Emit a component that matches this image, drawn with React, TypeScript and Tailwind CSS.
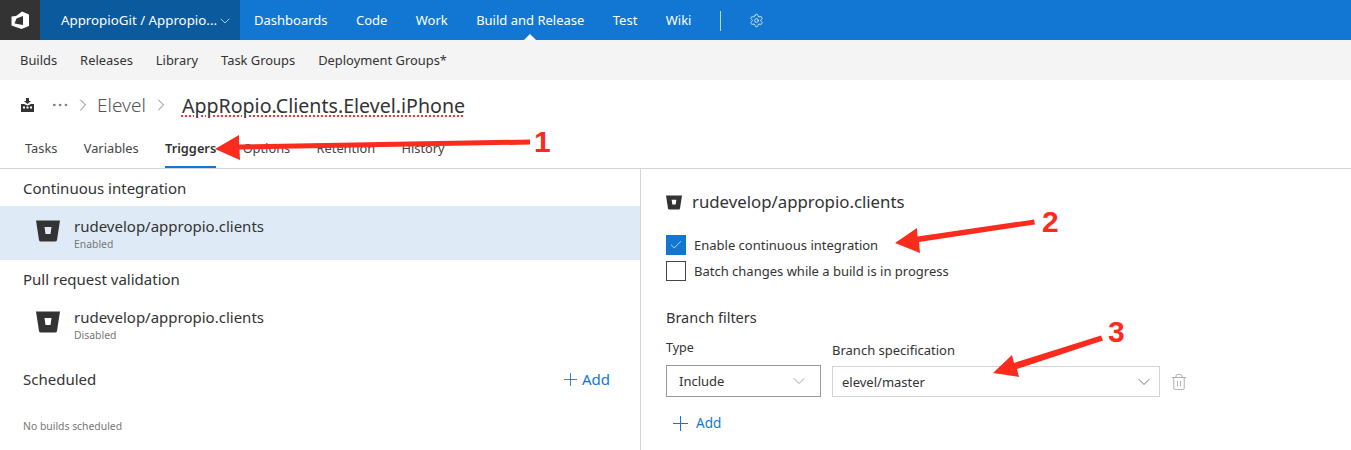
import { ChevronDown, ChevronRight, Settings, Trash2, Check, MoreHorizontal } from "lucide-react";

const font = "font-['Noto_Sans','Open_Sans',sans-serif]";

function BucketIcon({ className }: { className: string }) {
  return (
    <svg viewBox="0 0 24 22" className={className}>
      <path
        fillRule="evenodd"
        fill="#333"
        d="M0 0.5 H24 L21 20 Q20.8 21.5 19 21.5 H5 Q3.2 21.5 3 20 Z M8.5 7 L9.5 14 H14.5 L15.5 7 Z"
      />
    </svg>
  );
}

function Logo() {
  return (
    <svg viewBox="0 0 20 20" className="w-5 h-5">
      <path
        fillRule="evenodd"
        fill="#fff"
        d="M12 1.5 L19 4.5 V16 L11.5 19 L1.5 15.5 V6.5 L6 6 Z M13 6 L6.5 8.5 L4.5 13.5 L13 15 Z"
      />
    </svg>
  );
}

function PlusIcon({ className }: { className: string }) {
  return (
    <svg viewBox="0 0 15 15" className={className} stroke="#1277d3" strokeWidth="1">
      <path d="M7.5 0 V15 M0 7.5 H15" />
    </svg>
  );
}

function TreeItem({ sub }: { sub: string }) {
  return (
    <div className="flex items-center gap-[14px] pl-9 h-full">
      <BucketIcon className="w-6 h-[22px] mb-[4px]" />
      <div className="mt-[1px]">
        <div className="text-[15px] leading-[21px] text-[#333]">rudevelop/appropio.clients</div>
        <div className="text-[10.4px] leading-[14px] text-[#767676]">{sub}</div>
      </div>
    </div>
  );
}

function Annotations() {
  const num = "absolute text-[30px] leading-[36px] font-bold text-[#fb2b1e] font-['Liberation_Sans',sans-serif]";
  return (
    <div className="absolute inset-0 pointer-events-none">
      <svg width="1351" height="450" className="absolute left-0 top-0">
        <g fill="#fb2b1e" stroke="none">
          <path d="M215 149 L239 135 L239 144.5 L530 139.5 L530 144.5 L239.5 149.5 L240 160 Z" />
          <path d="M895 243 L917 228 L917.5 236.5 L1034 219.5 L1035 224.5 L919 242 L920 253 Z" />
          <path d="M993 373 L1012 355 L1014 363 L1101 335.5 L1103 340.5 L1017 369 L1019 377 Z" />
        </g>
      </svg>
      <span className={`${num} left-[534px] top-[124px]`}>1</span>
      <span className={`${num} left-[1042px] top-[204px]`}>2</span>
      <span className={`${num} left-[1108px] top-[314px]`}>3</span>
    </div>
  );
}

export default function App() {
  return (
    <div className={`relative w-[1351px] h-[450px] overflow-hidden bg-white ${font}`}>
      <div className="flex h-10 bg-[#1277d3] text-white text-[13px]">
        <div className="w-10 bg-[#333] flex items-center justify-center">
          <Logo />
        </div>
        <div className="w-[200px] bg-[#0b5a9e] flex items-center pl-[21px] pt-[1px]">
          <span className="text-[13.3px]">AppropioGit / Appropio...</span>
          <ChevronDown size={16} strokeWidth={1} />
        </div>
        <div className="flex items-center gap-[28.4px] pl-[14px] pt-[1px]">
          <span>Dashboards</span>
          <span>Code</span>
          <span>Work</span>
          <span className="relative h-full flex items-center">
            Build and Release
            <span className="absolute left-1/2 -translate-x-1/2 bottom-0 border-x-[6px] border-x-transparent border-b-[6px] border-b-white" />
          </span>
          <span>Test</span>
          <span>Wiki</span>
          <div className="w-px h-5 bg-white/70" />
          <Settings size={15} strokeWidth={1.2} />
        </div>
      </div>

      <div className="flex items-center gap-[23px] h-10 bg-[#f4f4f4] pl-5 pt-[2px] text-[12.9px] text-[#333]">
        <span>Builds</span>
        <span>Releases</span>
        <span>Library</span>
        <span>Task Groups</span>
        <span>Deployment Groups*</span>
      </div>

      <div className="flex items-center h-[50px] pl-[21px] text-[#333]">
        <svg viewBox="0 0 13 14" className="w-[13px] h-[14px]">
          <path fill="#333" d="M5 0 H8 V3 H10 L6.5 6 L3 3 H5 Z M0 6 H3 L6.5 7.5 L10 6 H13 V14 H0 Z" />
          <path fill="#fff" d="M2 8.5 H4 V10.5 H2 Z M5.5 8.5 H7.5 V10.5 H5.5 Z M9 8.5 H11 V10.5 H9 Z" />
        </svg>
        <MoreHorizontal size={20} strokeWidth={1} className="ml-[16px] text-[#555]" />
        <ChevronRight size={20} strokeWidth={1} className="ml-[3px] text-[#666]" />
        <span className="ml-[4px] pt-[1px] text-[19px] text-[#555] font-light">Elevel</span>
        <ChevronRight size={20} strokeWidth={1} className="ml-[5px] text-[#666]" />
        <span className="ml-[11px] pt-[1px] text-[19.6px] underline decoration-dotted decoration-[#f33] underline-offset-[3px]">
          AppRopio.Clients.Elevel.iPhone
        </span>
      </div>

      <div className="flex h-[39px] gap-[26.4px] pl-[25px] border-b border-[#d4d4d4] text-[12.8px] text-[#444]">
        <span className="pt-[9px]">Tasks</span>
        <span className="pt-[9px]">Variables</span>
        <span className="pt-[9px] font-semibold text-[#333] border-b-2 border-[#1277d3] h-[38px]">Triggers</span>
        <span className="pt-[9px]">Options</span>
        <span className="pt-[9px]">Retention</span>
        <span className="pt-[9px]">History</span>
      </div>

      <div className="flex h-[281px]">
        <div className="w-[641px] border-r border-[#d4d4d4] text-[#333]">
          <div className="h-[37px] flex items-center pl-[23px] pt-[1px] text-[15px]">Continuous integration</div>
          <div className="h-[54px] bg-[#deebf6]">
            <TreeItem sub="Enabled" />
          </div>
          <div className="h-[37px] flex items-center pl-[23px] pt-[1px] text-[15px]">Pull request validation</div>
          <div className="h-[54px]">
            <TreeItem sub="Disabled" />
          </div>
          <div className="h-[56px] flex items-center justify-between pl-[23px] pr-[30px] text-[15px]">
            <span>Scheduled</span>
            <span className="flex items-center gap-[5px] text-[#1277d3]">
              <PlusIcon className="w-[13px] h-[13px]" />
              Add
            </span>
          </div>
          <div className="pl-[23px] pt-[12px] text-[10.4px] leading-[15px] text-[#767676]">No builds scheduled</div>
        </div>

        <div className="flex-1 pl-[25px] text-[#333]">
          <div className="flex items-center gap-[10px] pt-[22px] text-[16.8px] leading-[22px]">
            <BucketIcon className="w-[16px] h-[15px]" />
            <span>rudevelop/appropio.clients</span>
          </div>
          <div className="mt-[22px] flex items-center gap-[8px] text-[13px] h-5">
            <span className="w-5 h-5 bg-[#1277d3] flex items-center justify-center">
              <Check size={14} strokeWidth={1.2} className="text-white" />
            </span>
            <span className="pt-[1px]">Enable continuous integration</span>
          </div>
          <div className="mt-[6px] flex items-center gap-[8px] text-[13px] h-5">
            <span className="w-5 h-5 border border-[#444]" />
            <span className="pt-[1px]">Batch changes while a build is in progress</span>
          </div>
          <div className="mt-[26px] text-[14.5px] leading-5">Branch filters</div>
          <div className="mt-[11px] flex items-end gap-[11px]">
            <div>
              <div className="text-[12.5px] leading-5 mb-[7px]">Type</div>
              <div className="w-[155px] h-8 border border-[#999] flex items-center justify-between pl-3 pr-[11px] text-[13px]">
                <span className="pt-[1px]">Include</span>
                <ChevronDown size={20} strokeWidth={0.9} className="text-[#888]" />
              </div>
            </div>
            <div className="pt-[2px]">
              <div className="text-[13px] leading-5 mb-[6px]">Branch specification</div>
              <div className="w-[328px] h-[31px] border border-[#d4d4d4] flex items-center justify-between pl-[9px] pr-[5px] text-[13px]">
                <span className="pt-[2px]">elevel/master</span>
                <ChevronDown size={20} strokeWidth={1} className="text-[#555]" />
              </div>
            </div>
            <Trash2 size={18} strokeWidth={1} className="-ml-px mb-[6px] text-[#999]" />
          </div>
          <div className="mt-[16px] ml-[7px] flex items-center gap-[8px] text-[13.5px] text-[#1277d3]">
            <PlusIcon className="w-[15px] h-[15px]" />
            Add
          </div>
        </div>
      </div>

      <Annotations />
    </div>
  );
}
